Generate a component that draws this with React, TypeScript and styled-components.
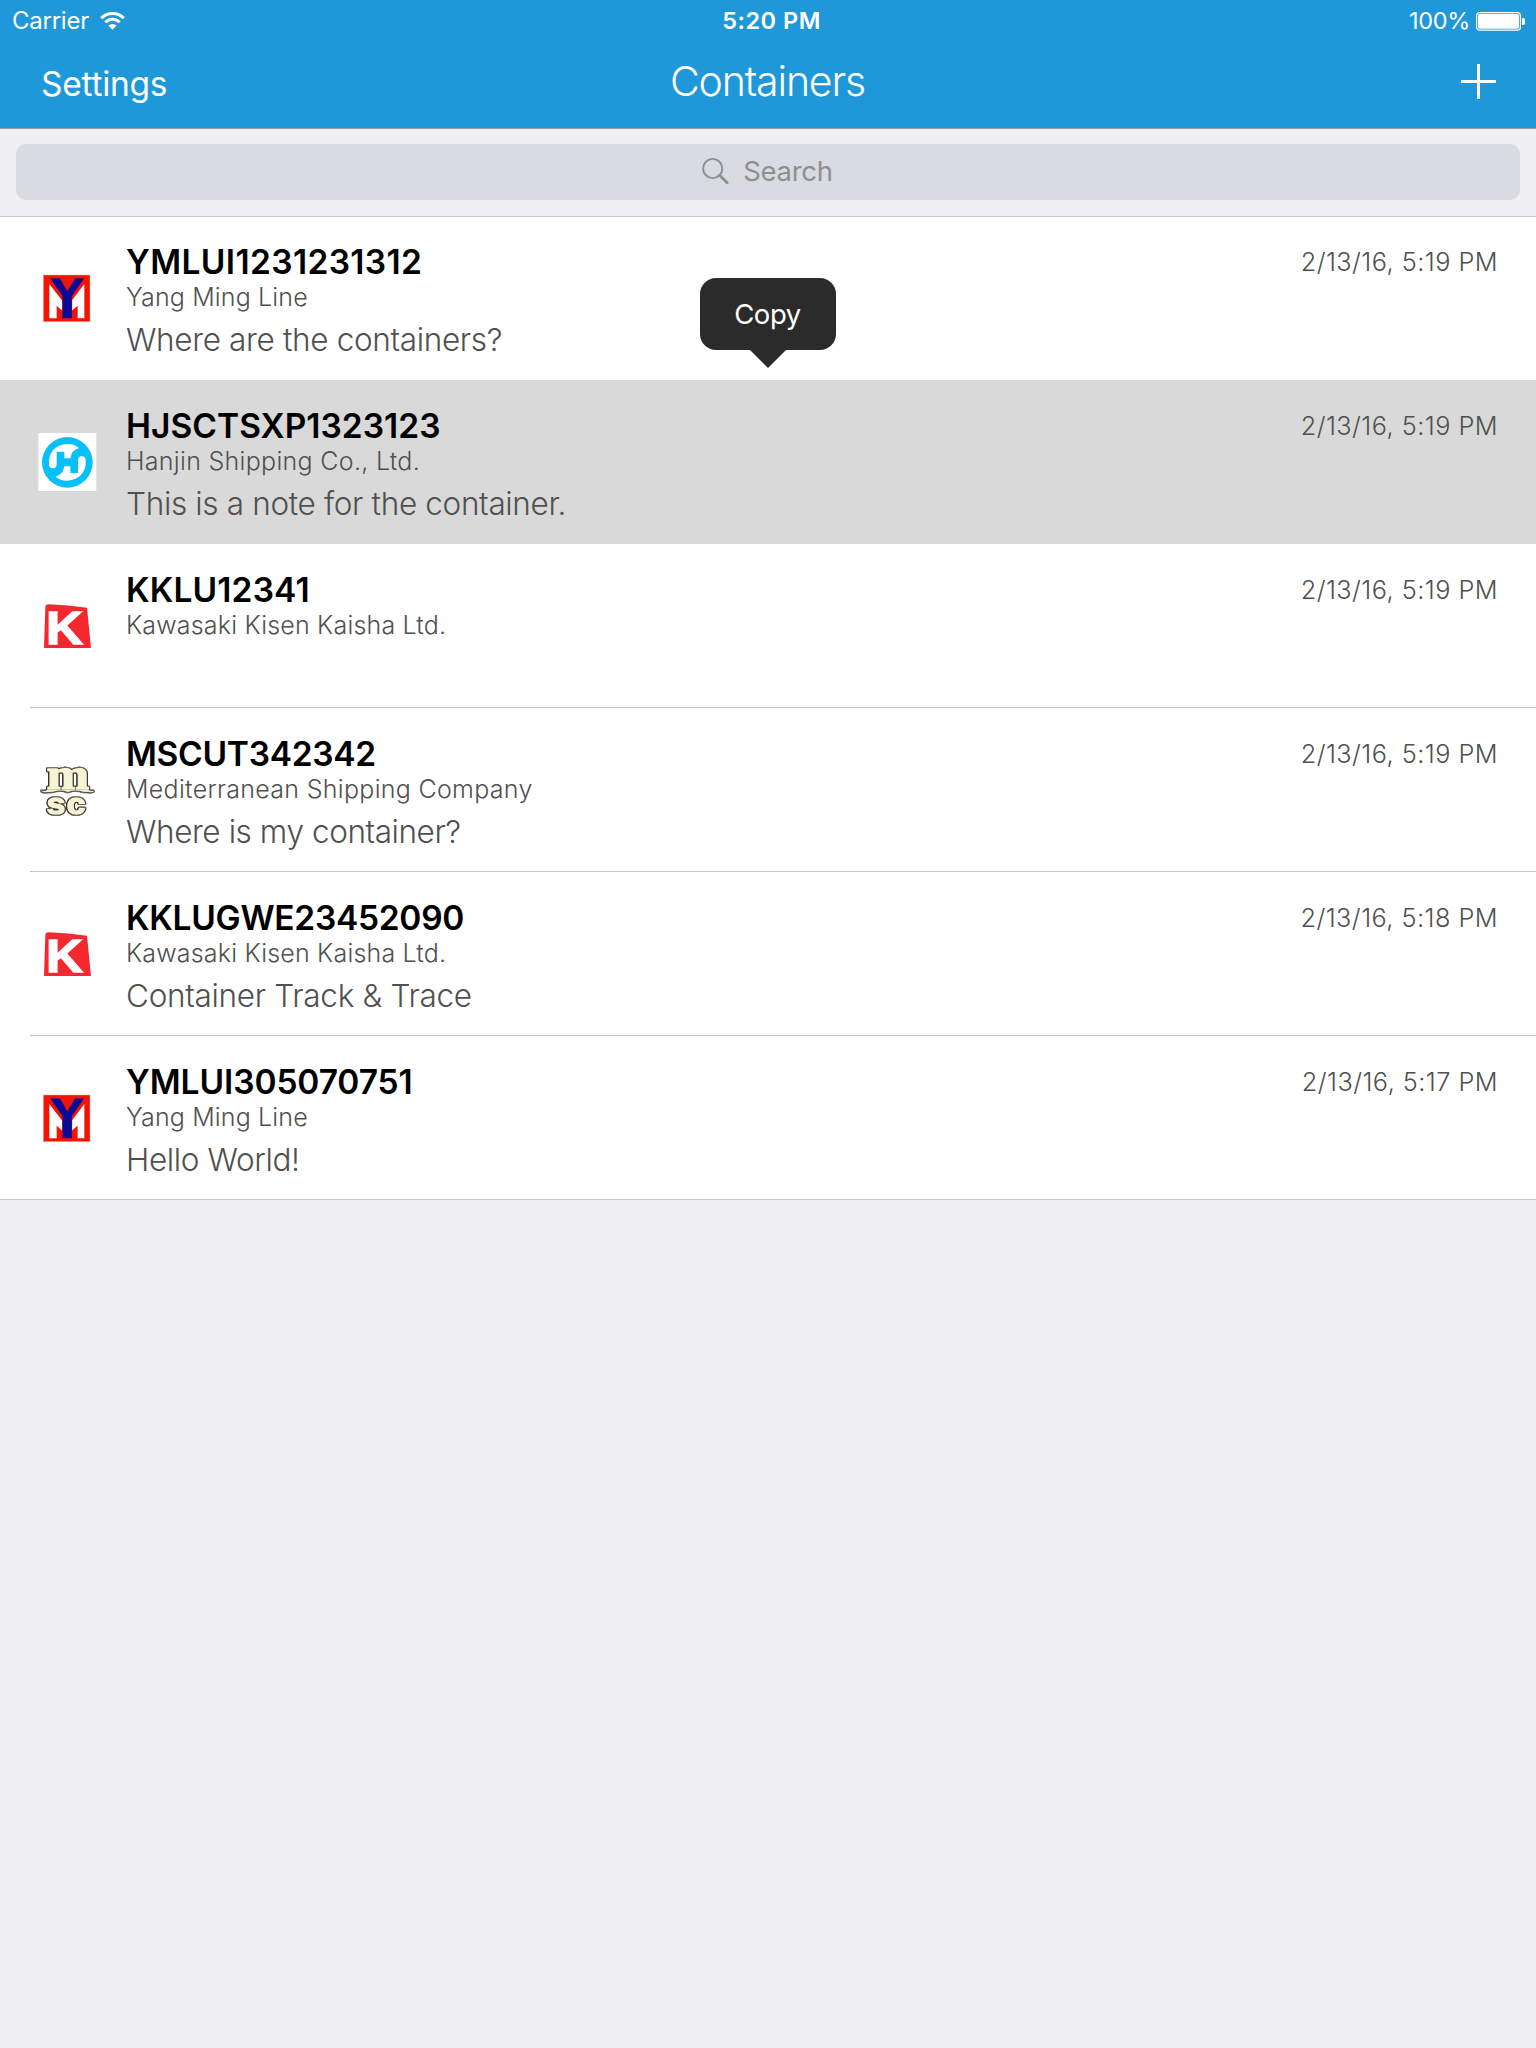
import React from "react";
import styled, { createGlobalStyle } from "styled-components";

const GlobalStyle = createGlobalStyle`
  html, body { margin: 0; padding: 0; background: #efeff4; }
  * { box-sizing: border-box; }
`;

const Screen = styled.div`
  width: 1536px;
  min-height: 2048px;
  display: flex;
  flex-direction: column;
  background: #efeff4;
  font-family: Inter, "Liberation Sans", sans-serif;
  overflow: hidden;
  white-space: nowrap;
`;

const Header = styled.header`
  height: 129px;
  background: #1e98d8;
  color: #fff;
  border-bottom: 1px solid #9a9ba0;
`;

const StatusBar = styled.div`
  height: 41px;
  display: grid;
  grid-template-columns: 1fr auto 1fr;
  align-items: center;
  padding: 1px 11px 0 12px;
  line-height: 40px;
`;

const Carrier = styled.div`
  display: flex;
  align-items: center;
  gap: 11px;
  font-size: 24px;
  letter-spacing: -0.25px;
`;

const Clock = styled.div`
  font-size: 23.5px;
  font-weight: 600;
  letter-spacing: 0.5px;
  padding-left: 6px;
`;

const Battery = styled.div`
  display: flex;
  justify-content: flex-end;
  align-items: center;
  gap: 6px;
  font-size: 23.5px;
  letter-spacing: -0.3px;
`;

const NavBar = styled.nav`
  height: 85px;
  display: grid;
  grid-template-columns: 1fr auto 1fr;
  align-items: center;
  padding: 0 40px 0 41px;
`;

const NavButton = styled.span`
  font-size: 33.5px;
  line-height: 40px;
  letter-spacing: -0.25px;
`;

const NavTitle = styled.h1`
  margin: 0;
  padding: 0 2px 5px 0;
  font-size: 41px;
  line-height: 40px;
  font-weight: 300;
  letter-spacing: -1.15px;
`;

const AddButton = styled.span`
  justify-self: end;
  display: flex;
  padding-bottom: 5px;
`;

const SearchBar = styled.div`
  height: 87px;
  padding: 15px 16px 16px;
`;

const SearchField = styled.div`
  height: 56px;
  border-radius: 10px;
  background: #d9dae2;
  color: #8e8e93;
  display: flex;
  align-items: center;
  justify-content: center;
  gap: 14px;
  padding: 0 1px 2px 0;
  font-size: 27.5px;
  line-height: 40px;
  letter-spacing: -0.3px;
`;

const List = styled.main`
  display: flex;
  flex-direction: column;
  background: #fff;
  box-shadow: inset 0 1px #c8c7cc, inset 0 -1px #c8c7cc;
`;

const Row = styled.section<{ $selected?: boolean; $line?: boolean }>`
  position: relative;
  height: 164px;
  display: flex;
  padding-left: 30px;
  background: ${(p) =>
    p.$selected
      ? "#d9d9d9"
      : p.$line
        ? "linear-gradient(#c8c7cc, #c8c7cc) 30px 100% / 100% 1px no-repeat"
        : "none"};
`;

const Emblem = styled.svg`
  width: 76px;
  height: 76px;
  margin-top: 44px;
  flex: none;
`;

const Details = styled.div`
  flex: 1;
  padding: 26px 0 0 20px;
`;

const Code = styled.div<{ $track: number }>`
  font-size: 33.5px;
  line-height: 40px;
  font-weight: 600;
  color: #000;
  letter-spacing: ${(p) => p.$track}px;
`;

const Company = styled.div<{ $track: number }>`
  font-size: 25px;
  line-height: 30px;
  font-weight: 300;
  color: #505050;
  letter-spacing: ${(p) => p.$track}px;
`;

const Note = styled.div<{ $track: number }>`
  margin-top: 8px;
  font-size: 31.5px;
  line-height: 40px;
  font-weight: 300;
  color: #505050;
  letter-spacing: ${(p) => p.$track}px;
`;

const Stamp = styled.time`
  padding: 31px 38px 0 0;
  font-size: 25.3px;
  line-height: 30px;
  font-weight: 300;
  color: #505050;
  letter-spacing: 0.45px;
`;

const CopyMenu = styled.div`
  position: absolute;
  left: 700px;
  bottom: 194px;
  width: 136px;
  height: 72px;
  padding-right: 1px;
  border-radius: 16px;
  background: #2b2b2b;
  color: #fff;
  display: flex;
  align-items: center;
  justify-content: center;
  font-size: 27.5px;
  line-height: 40px;
  letter-spacing: -0.4px;
  z-index: 1;

  &::after {
    content: "";
    position: absolute;
    top: 100%;
    left: 49.5px;
    border: 18px solid transparent;
    border-top-color: #2b2b2b;
    border-bottom: 0;
  }
`;

const Outlined = styled.g`
  fill: #f7f3d3;
  stroke: #f7f3d3;
  filter: drop-shadow(2.5px 0 0 #33332c) drop-shadow(-2.5px 0 0 #33332c)
    drop-shadow(0 2px 0 #33332c) drop-shadow(0 -2px 0 #33332c);
`;

const WifiIcon = () => (
  <svg width="25" height="18" viewBox="0 0 25 18" fill="none" stroke="#fff">
    <path d="M1.2 6.2a16 16 0 0 1 22.6 0" strokeWidth="3" />
    <path d="M5.3 10.3a10.2 10.2 0 0 1 14.4 0" strokeWidth="2.9" />
    <path d="M12.5 17.8L8.4 13.6a5.9 5.9 0 0 1 8.2 0Z" fill="#fff" stroke="none" />
  </svg>
);

const BatteryIcon = () => (
  <svg width="49" height="19" viewBox="0 0 49 19">
    <rect x="0.6" y="0.6" width="43.8" height="17.6" rx="3" fill="none" stroke="#fff" strokeWidth="1.2" />
    <rect x="2" y="2" width="41" height="14.8" rx="1.8" fill="#fff" />
    <path d="M46 6h1.2a1.8 1.8 0 0 1 1.8 1.8v3.4a1.8 1.8 0 0 1-1.8 1.8H46z" fill="#fff" />
  </svg>
);

const PlusIcon = () => (
  <svg width="35" height="35" viewBox="0 0 35 35" stroke="#fff" strokeWidth="3">
    <path d="M0 17.5h35M17.5 0v35" />
  </svg>
);

const SearchIcon = () => (
  <svg width="27" height="27" viewBox="0 0 27 27" fill="none" stroke="#8e8e93">
    <circle cx="10.7" cy="10.5" r="9.6" strokeWidth="1.9" />
    <path d="M17.5 17.2l7.6 7.6" strokeWidth="2.8" strokeLinecap="round" />
  </svg>
);

const YangMing = () => (
  <Emblem viewBox="0 0 228 228">
    <rect x="40" y="45" width="140" height="140" fill="#f21300" stroke="#f6a79f" strokeWidth="1.5" />
    <path d="M58 72L97 122V152L80 137V175H58zM163 72L125 122V152L143 137V175H163z" fill="#fff" />
    <path d="M60 55H90L112 93L135 55H163L126 108V175H97V108z" fill="#0a0a96" stroke="#f21300" strokeWidth="1" />
  </Emblem>
);

const Hanjin = () => (
  <Emblem viewBox="0 -3 228 228">
    <rect x="25" y="24" width="174" height="174" fill="#fff" />
    <circle cx="112" cy="112" r="76" fill="#08c0f8" />
    {[0, 180].map((turn) => (
      <path
        key={turn}
        transform={`rotate(${turn} 112 112)`}
        d="M57 118C54 84 76 58 112 57Q132 56 147 69Q124 76 122 98V100H103V80H80V118A11.5 12 0 0 1 57 118Z"
        fill="#fff"
      />
    ))}
  </Emblem>
);

const KLine = () => (
  <Emblem viewBox="0 -6 228 228">
    <path d="M46 52Q46 43 56 43Q115 46 171 53L183 174H42Z" fill="#f4282e" />
    <text
      transform="translate(48 162) scale(1.13 1)"
      fontFamily="Liberation Sans, sans-serif"
      fontWeight="700"
      fontSize="136"
      fill="#fff"
      stroke="#fff"
      strokeWidth="4"
    >
      K
    </text>
  </Emblem>
);

const Msc = () => (
  <Emblem viewBox="0 0 228 228">
    <Outlined>
      <text
        transform="translate(50 111) scale(1.12 1)"
        fontFamily="Liberation Serif, serif"
        fontWeight="700"
        fontSize="136"
        strokeWidth="5"
      >
        m
      </text>
      <path
        d="M34 116Q42 120 52 114H174Q184 119 192 116Q188 122 176 120Q160 120 148 116Q128 112 114 120Q98 112 80 116Q66 121 52 120Q38 122 34 116Z"
        strokeWidth="1"
      />
    </Outlined>
    <Outlined>
      <text
        transform="translate(50 185) scale(1.1 1)"
        fontFamily="Liberation Sans, sans-serif"
        fontWeight="700"
        fontSize="91"
        letterSpacing="4"
        strokeWidth="5"
      >
        sc
      </text>
    </Outlined>
  </Emblem>
);

interface Shipment {
  logo: React.FC;
  code: string;
  company: string;
  note?: string;
  time: string;
  track: [number, number, number];
  selected?: boolean;
  line?: boolean;
}

const shipments: Shipment[] = [
  { logo: YangMing, code: "YMLUI1231231312", company: "Yang Ming Line", note: "Where are the containers?", time: "2/13/16, 5:19 PM", track: [0.36, 0.15, -0.34] },
  { logo: Hanjin, code: "HJSCTSXP1323123", company: "Hanjin Shipping Co., Ltd.", note: "This is a note for the container.", time: "2/13/16, 5:19 PM", track: [0.03, 0.3, -0.34], selected: true },
  { logo: KLine, code: "KKLU12341", company: "Kawasaki Kisen Kaisha Ltd.", time: "2/13/16, 5:19 PM", track: [0.15, 0.19, 0], line: true },
  { logo: Msc, code: "MSCUT342342", company: "Mediterranean Shipping Company", note: "Where is my container?", time: "2/13/16, 5:19 PM", track: [-0.3, 0.3, -0.42], line: true },
  { logo: KLine, code: "KKLUGWE23452090", company: "Kawasaki Kisen Kaisha Ltd.", note: "Container Track & Trace", time: "2/13/16, 5:18 PM", track: [-0.28, 0.19, -0.3], line: true },
  { logo: YangMing, code: "YMLUI305070751", company: "Yang Ming Line", note: "Hello World!", time: "2/13/16, 5:17 PM", track: [-0.1, 0.15, -0.38] },
];

export default function App() {
  return (
    <Screen>
      <GlobalStyle />
      <Header>
        <StatusBar>
          <Carrier>
            Carrier
            <WifiIcon />
          </Carrier>
          <Clock>5:20 PM</Clock>
          <Battery>
            100%
            <BatteryIcon />
          </Battery>
        </StatusBar>
        <NavBar>
          <NavButton>Settings</NavButton>
          <NavTitle>Containers</NavTitle>
          <AddButton>
            <PlusIcon />
          </AddButton>
        </NavBar>
      </Header>
      <SearchBar>
        <SearchField>
          <SearchIcon />
          Search
        </SearchField>
      </SearchBar>
      <List>
        {shipments.map(({ logo: Logo, ...s }) => (
          <Row key={s.code} $selected={s.selected} $line={s.line}>
            <Logo />
            <Details>
              <Code $track={s.track[0]}>{s.code}</Code>
              <Company $track={s.track[1]}>{s.company}</Company>
              {s.note && <Note $track={s.track[2]}>{s.note}</Note>}
            </Details>
            <Stamp>{s.time}</Stamp>
            {s.selected && <CopyMenu>Copy</CopyMenu>}
          </Row>
        ))}
      </List>
    </Screen>
  );
}
